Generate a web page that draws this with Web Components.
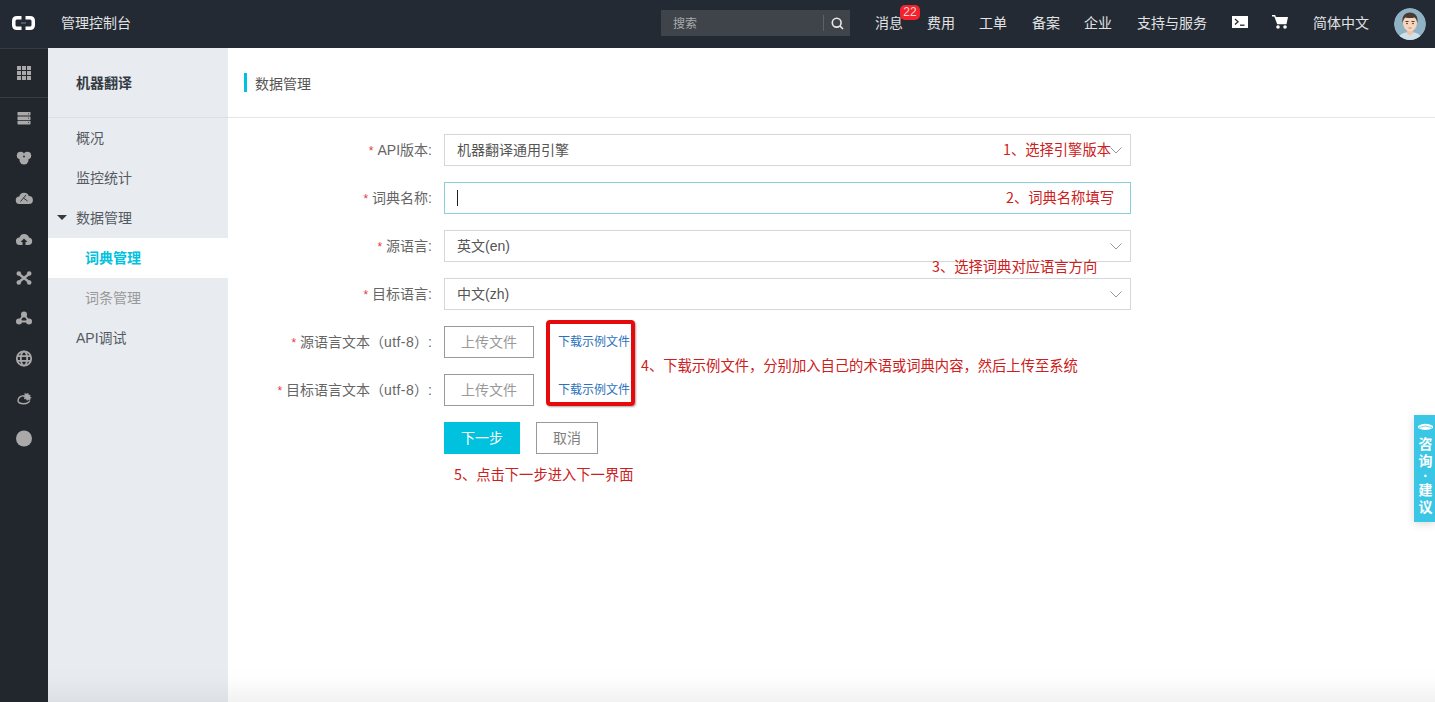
<!DOCTYPE html>
<html lang="zh"><head><meta charset="utf-8"><title>数据管理</title>
<style>
html,body{margin:0;height:702px;overflow:hidden;background:#fff}
body{font:14px "Liberation Sans","Noto Sans CJK SC",sans-serif;color:#555}
</style></head><body>
<app-shell>
  <top-bar slot="top"></top-bar>
  <icon-rail slot="rail"></icon-rail>
  <side-nav slot="side"></side-nav>
  <main-panel slot="main" heading="数据管理">
    <form-row label="API版本:"><select-box value="机器翻译通用引擎"></select-box></form-row>
    <form-row label="词典名称:"><text-box></text-box></form-row>
    <form-row label="源语言:"><select-box value="英文(en)"></select-box></form-row>
    <form-row label="目标语言:"><select-box value="中文(zh)"></select-box></form-row>
    <form-row label="源语言文本（<span style='letter-spacing:.4px'>utf-8</span>）:"><upload-line></upload-line></form-row>
    <form-row label="目标语言文本（<span style='letter-spacing:.4px'>utf-8</span>）:"><upload-line></upload-line></form-row>
    <form-row><action-bar></action-bar></form-row>
    <note-mark slot="over" x="775" y="89" w="120">1、选择引擎版本</note-mark>
    <note-mark slot="over" x="778" y="137" w="120">2、词典名称填写</note-mark>
    <note-mark slot="over" x="704" y="206" w="200">3、选择词典对应语言方向</note-mark>
    <note-mark slot="over" x="413" y="305" w="470">4、下载示例文件，分别加入自己的术语或词典内容，然后上传至系统</note-mark>
    <note-mark slot="over" x="226" y="414" w="200">5、点击下一步进入下一界面</note-mark>
    <red-frame slot="over"></red-frame>
  </main-panel>
  <consult-tab slot="float"></consult-tab>
</app-shell>
<script>
function def(name, html, init){
  customElements.define(name, class extends HTMLElement{
    connectedCallback(){
      if(this.shadowRoot) return;
      const r=this.attachShadow({mode:'open'});
      r.innerHTML=typeof html==='function'?html(this):html;
      if(init) init(this,r);
    }
  });
}
def('app-shell',`<style>
:host{display:grid;grid-template:48px 654px/48px 180px 1207px;width:1435px;height:702px;position:relative;overflow:hidden}
.fade{position:absolute;left:48px;right:0;bottom:0;height:34px;pointer-events:none;background:linear-gradient(to bottom,rgba(0,0,0,0),rgba(0,0,0,.012) 40%,rgba(0,0,0,.05))}
</style><slot name="top"></slot><slot name="rail"></slot><slot name="side"></slot><slot name="main"></slot><slot name="float"></slot><div class="fade"></div>`);

def('top-bar',`<style>
:host{display:flex;grid-column:1/4;height:48px;background:#242a33;align-items:center;color:#e0e2e4;font-size:14px;grid-row:1;box-sizing:border-box;padding-bottom:2px}
.logo{width:48px;display:flex;justify-content:center;padding-right:2px;box-sizing:border-box}
.name{margin-left:13px;margin-bottom:2px}
.search{margin-left:auto;width:189px;height:26px;background:#3f444b;display:flex;align-items:center;box-sizing:border-box;font-size:12px;color:#a9abae;padding-left:12px}
.search span{flex:1;margin-bottom:2px}
.search i{width:1px;height:16px;background:#5d6167}
.search svg{margin:0 6px 0 7px}
nav{display:flex;align-items:center;margin-left:25px;margin-right:9px}
nav>*{margin-right:24px;white-space:nowrap;margin-bottom:2px}
nav>*:last-child{margin-right:0}
.msg{position:relative}
.badge{position:absolute;left:25px;top:-7px;width:20px;height:15px;border-radius:5px;background:#f5222d;color:#f6d6d8;font-size:12px;line-height:15px;text-align:center}
nav>.av{width:32px;height:32px;border-radius:50%;overflow:hidden;display:block;margin:2px 0 0 1px}
svg{display:block}
</style>
<div class="logo"><svg width="23" height="14" viewBox="0 0 23 14" fill="none" stroke="#fff" stroke-width="3.500"><path d="M9.500 1.750H5Q1.750 1.750 1.750 5V9Q1.750 12.250 5 12.250H9.500"/><path d="M13.500 1.750H18Q21.250 1.750 21.250 5V9Q21.250 12.250 18 12.250H13.500"/><path d="M9 7H14" stroke="#80858b" stroke-width="1"/></svg></div>
<div class="name">管理控制台</div>
<div class="search"><span>搜索</span><i></i><svg width="13" height="13" viewBox="0 0 13 13" fill="none" stroke="#e8e8e8" stroke-width="1.600"><circle cx="5.700" cy="5.700" r="4.400"/><path d="M8.900 8.900L12 12"/></svg></div>
<nav>
<span class="msg">消息<span class="badge">22</span></span>
<span>费用</span><span>工单</span><span style="margin-left:1px">备案</span><span>企业</span><span style="margin-left:1px;margin-right:25px">支持与服务</span>
<svg width="16" height="12" viewBox="0 0 16 12"><rect width="16" height="12" fill="#fff"/><path d="M3 3l3 2.700L3 8.400" fill="none" stroke="#242a33" stroke-width="1.300"/><path d="M8 9.200h4.500" stroke="#242a33" stroke-width="1.300"/></svg>
<svg width="16" height="14" viewBox="0 0 16 14"><path d="M0 0h3.200l.7 2H16l-1.500 7.200H5.200L2.300 1.600H0z" fill="#fff"/><circle cx="6" cy="12" r="1.800" fill="#fff"/><circle cx="13" cy="12" r="1.800" fill="#fff"/></svg>
<span style="margin-left:1px">简体中文</span>
<svg class="av" viewBox="0 0 32 32"><circle cx="16" cy="16" r="16" fill="#8fb2c4"/><path d="M4 32c1-6 6-8 12-8s11 2 12 8z" fill="#cfe0ea"/><path d="M13 20h6v5.500l-3 2-3-2z" fill="#eec3a5"/><ellipse cx="16" cy="15" rx="7" ry="8.500" fill="#f7d5bb"/><path d="M8.600 15C7.500 8 11 4.500 16 4.500S24.500 8 23.400 15c-.7-3-1.600-5-3-5.500-2.500.8-6.500.8-8.800 0-1.400.5-2.300 2.500-3 5.500z" fill="#4a3a33"/><path d="M11.500 13.500h3M17.500 13.500h3" stroke="#4a3a33" stroke-width="1"/><circle cx="13" cy="15.500" r=".8" fill="#333"/><circle cx="19" cy="15.500" r=".8" fill="#333"/><path d="M14.500 20h3" stroke="#c66" stroke-width=".8"/></svg>
</nav>`);

const g='#a9a9a9', d='#22272e';
const railIcons=[
`<g transform="translate(1.500 1)"><rect width="13" height="3.600" rx=".6"/><rect y="4.400" width="13" height="3.600" rx=".6"/><rect y="8.800" width="13" height="3.600" rx=".6"/><path d="M10.500 1.800h1M10.500 6.200h1M10.500 10.600h1" stroke="${d}" stroke-width=".8"/></g>`,
`<circle cx="4.600" cy="4.500" r="3.800"/><circle cx="11.400" cy="4.500" r="3.800"/><circle cx="8" cy="9" r="4.500"/><circle cx="8" cy="5.500" r=".9" fill="${d}"/>`,
`<path d="M3.800 13a3.800 3.800 0 0 1-.5-7.600A5 5 0 0 1 12.800 5a4 4 0 0 1 .2 8z"/><path d="M4.500 10.500l3-3.500 4 3M7.500 7l2.500-3" fill="none" stroke="${d}" stroke-width=".9"/>`,
`<path d="M4 14a3.800 3.800 0 0 1-.5-7.600A5 5 0 0 1 13 6.500a3.800 3.800 0 0 1 0 7.500H9.500V11h2L8 7.500 4.500 11h2v3z"/>`,
`<path d="M3 3l10 8M13 3L3 11" stroke="${g}" stroke-width="2.400"/><circle cx="2.800" cy="2.500" r="2.300"/><circle cx="13.200" cy="2.500" r="2.300"/><circle cx="2.800" cy="11.500" r="2.300"/><circle cx="13.200" cy="11.500" r="2.300"/>`,
`<path d="M8 3.500L3 10M8 3.500l5 6.500M3 10.500h10" stroke="${g}" stroke-width="1.800"/><circle cx="8" cy="3.500" r="3"/><circle cx="3" cy="10.500" r="3"/><circle cx="13" cy="10.500" r="3"/>`,
`<g fill="none" stroke="${g}" stroke-width="1.800"><circle cx="8" cy="7.500" r="7.200"/><ellipse cx="8" cy="7.500" rx="3.200" ry="7.200"/><path d="M1 5.200h14M1 9.800h14"/></g>`,
`<path d="M2 9.500a5 5 0 0 1 6-4.500M13.800 9.500c-.8 2-2.800 3.200-6 3.200-3.500 0-5.800-1.200-5.800-3.200" fill="none" stroke="${g}" stroke-width="1.400"/><path d="M9.500 1l1 1.700 1.900-.8.300 2 2-.1-.7 1.900 1.800 1-1.800 1 .6 1.400-2.100-.3-1.500 1-1-1.800-2 .2.500-2-1.700-1.200 1.900-.8-.4-2 2 .6z"/>`,
`<circle cx="8" cy="7.500" r="8"/>`
];
def('icon-rail',`<style>
:host{display:block;background:${d};grid-row:2;grid-column:1;border-top:1px solid #373c43;box-sizing:border-box}
.apps{height:48px;border-bottom:1px solid #373c43;display:flex;align-items:center;justify-content:center}
.it{height:40px;display:flex;align-items:center;justify-content:center}
svg{display:block;fill:${g};overflow:visible}
</style><div class="apps"><svg width="14" height="14" viewBox="0 0 14 14"><path d="M0 0h4v4H0zM5 0h4v4H5zM10 0h4v4h-4zM0 5h4v4H0zM5 5h4v4H5zM10 5h4v4h-4zM0 10h4v4H0zM5 10h4v4H5zM10 10h4v4h-4z"/></svg></div>`+
railIcons.map(p=>`<div class="it"><svg width="16" height="15" viewBox="0 0 16 15">${p}</svg></div>`).join(''));

def('side-nav',`<style>
:host{display:block;background:#e8ebf0;grid-row:2;grid-column:2;color:#555a62;font-size:14px}
.h{height:69px;border-bottom:1px solid #dcdfe4;padding-left:28px;line-height:70px;font-weight:bold;color:#333a42}
.i{height:40px;line-height:40px;padding-left:28px;position:relative}
.s{padding-left:37px;color:#999}
.a{background:#fff;color:#00c1de;font-weight:bold}
.t{position:absolute;left:9px;top:17px;width:0;height:0;border:5px solid transparent;border-top:5px solid #333a42;border-bottom:0}
</style><div class="h">机器翻译</div>
<div class="i">概况</div><div class="i">监控统计</div>
<div class="i"><span class="t"></span>数据管理</div>
<div class="i s a">词典管理</div><div class="i s">词条管理</div><div class="i">API调试</div>`);

def('main-panel',t=>`<style>
:host{display:block;grid-row:2;grid-column:3;position:relative;background:#fff}
.h{height:69px;border-bottom:1px solid #e3e5e8;display:flex;align-items:center;padding-left:16px;color:#555}
.h i{width:3px;height:19px;background:#00c1de;margin-right:8px}
.f{padding-top:16px;display:flex;flex-direction:column;gap:16px}
</style><div class="h"><i></i>${t.getAttribute('heading')}</div><div class="f"><slot></slot></div><slot name="over"></slot>`);

def('form-row',t=>{const l=t.getAttribute('label');return `<style>
:host{display:grid;grid-template-columns:204px 687px;column-gap:12px;height:32px;line-height:32px}
.l{text-align:right;color:#666;font-size:14px;white-space:nowrap}
b{color:#e4393c;font-weight:normal;margin-right:4px;font-size:12px}
</style><div class="l">${l?'<b>*</b>'+l:''}</div><div><slot></slot></div>`});

def('select-box',t=>`<style>
:host{display:flex;height:32px;box-sizing:border-box;border:1px solid #d7d7d7;align-items:center;padding-left:12px;color:#555;justify-content:space-between;line-height:30px}
svg{margin-right:8px}
</style><span>${t.getAttribute('value')}</span><svg width="12" height="7" viewBox="0 0 12 7" fill="none" stroke="#999"><path d="M.5.5L6 6 11.500.5"/></svg>`);

def('text-box',`<style>
:host{display:flex;height:32px;box-sizing:border-box;border:1px solid #88cfdc;align-items:center;padding-left:12px}
i{width:1px;height:16px;background:#222}
</style><i></i>`);

def('upload-line',`<style>
:host{display:flex;align-items:center;height:32px}
.b{width:90px;height:32px;box-sizing:border-box;border:1px solid #999;color:#999;text-align:center;line-height:30px}
a{margin-left:24px;font-size:12px;color:#2a72bd;text-decoration:none}
</style><div class="b">上传文件</div><a>下载示例文件</a>`);

def('action-bar',`<style>
:host{display:flex;gap:16px;height:32px}
div{height:32px;box-sizing:border-box;text-align:center;line-height:30px}
.n{width:76px;background:#00c1de;color:#fff;line-height:32px}
.c{width:62px;border:1px solid #999;color:#808080}
</style><div class="n">下一步</div><div class="c">取消</div>`);

def('note-mark',t=>`<style>
:host{position:absolute;left:${t.getAttribute('x')}px;top:${t.getAttribute('y')}px;width:${t.getAttribute('w')}px;font:14.300px/24px "Noto Sans CJK SC",sans-serif;color:#cc2020;white-space:nowrap}
</style><slot></slot>`);

def('red-frame',`<style>
:host{position:absolute;left:318px;top:272px;width:89px;height:86px;box-sizing:border-box;border:4px solid #e60a0a;border-radius:4px;box-shadow:1px 1px 2px rgba(0,0,0,.35);pointer-events:none}
</style>`);

def('consult-tab',`<style>
:host{position:absolute;right:0;top:415px;width:21px;height:107px;background:#3cc6e6;color:#fff;font-weight:bold;font-size:14px;line-height:17px;text-align:center;box-shadow:0 2px 8px rgba(0,0,0,.15);display:flex;flex-direction:column;align-items:center;padding:8px 0 0 2px;box-sizing:border-box}
svg{display:block;margin-bottom:4px}
.dot{height:12px;line-height:12px}
</style><svg width="15" height="9" viewBox="0 0 15 9"><path d="M0 3Q7.500-1.500 15 3V5Q7.500 9 0 5z" fill="#fff"/><path d="M1 4.500Q7.500 1.500 14 4.500" fill="none" stroke="#3cc6e6" stroke-width=".7"/></svg><span>咨</span><span>询</span><span class="dot">·</span><span>建</span><span>议</span>`);
</script>
</body></html>
